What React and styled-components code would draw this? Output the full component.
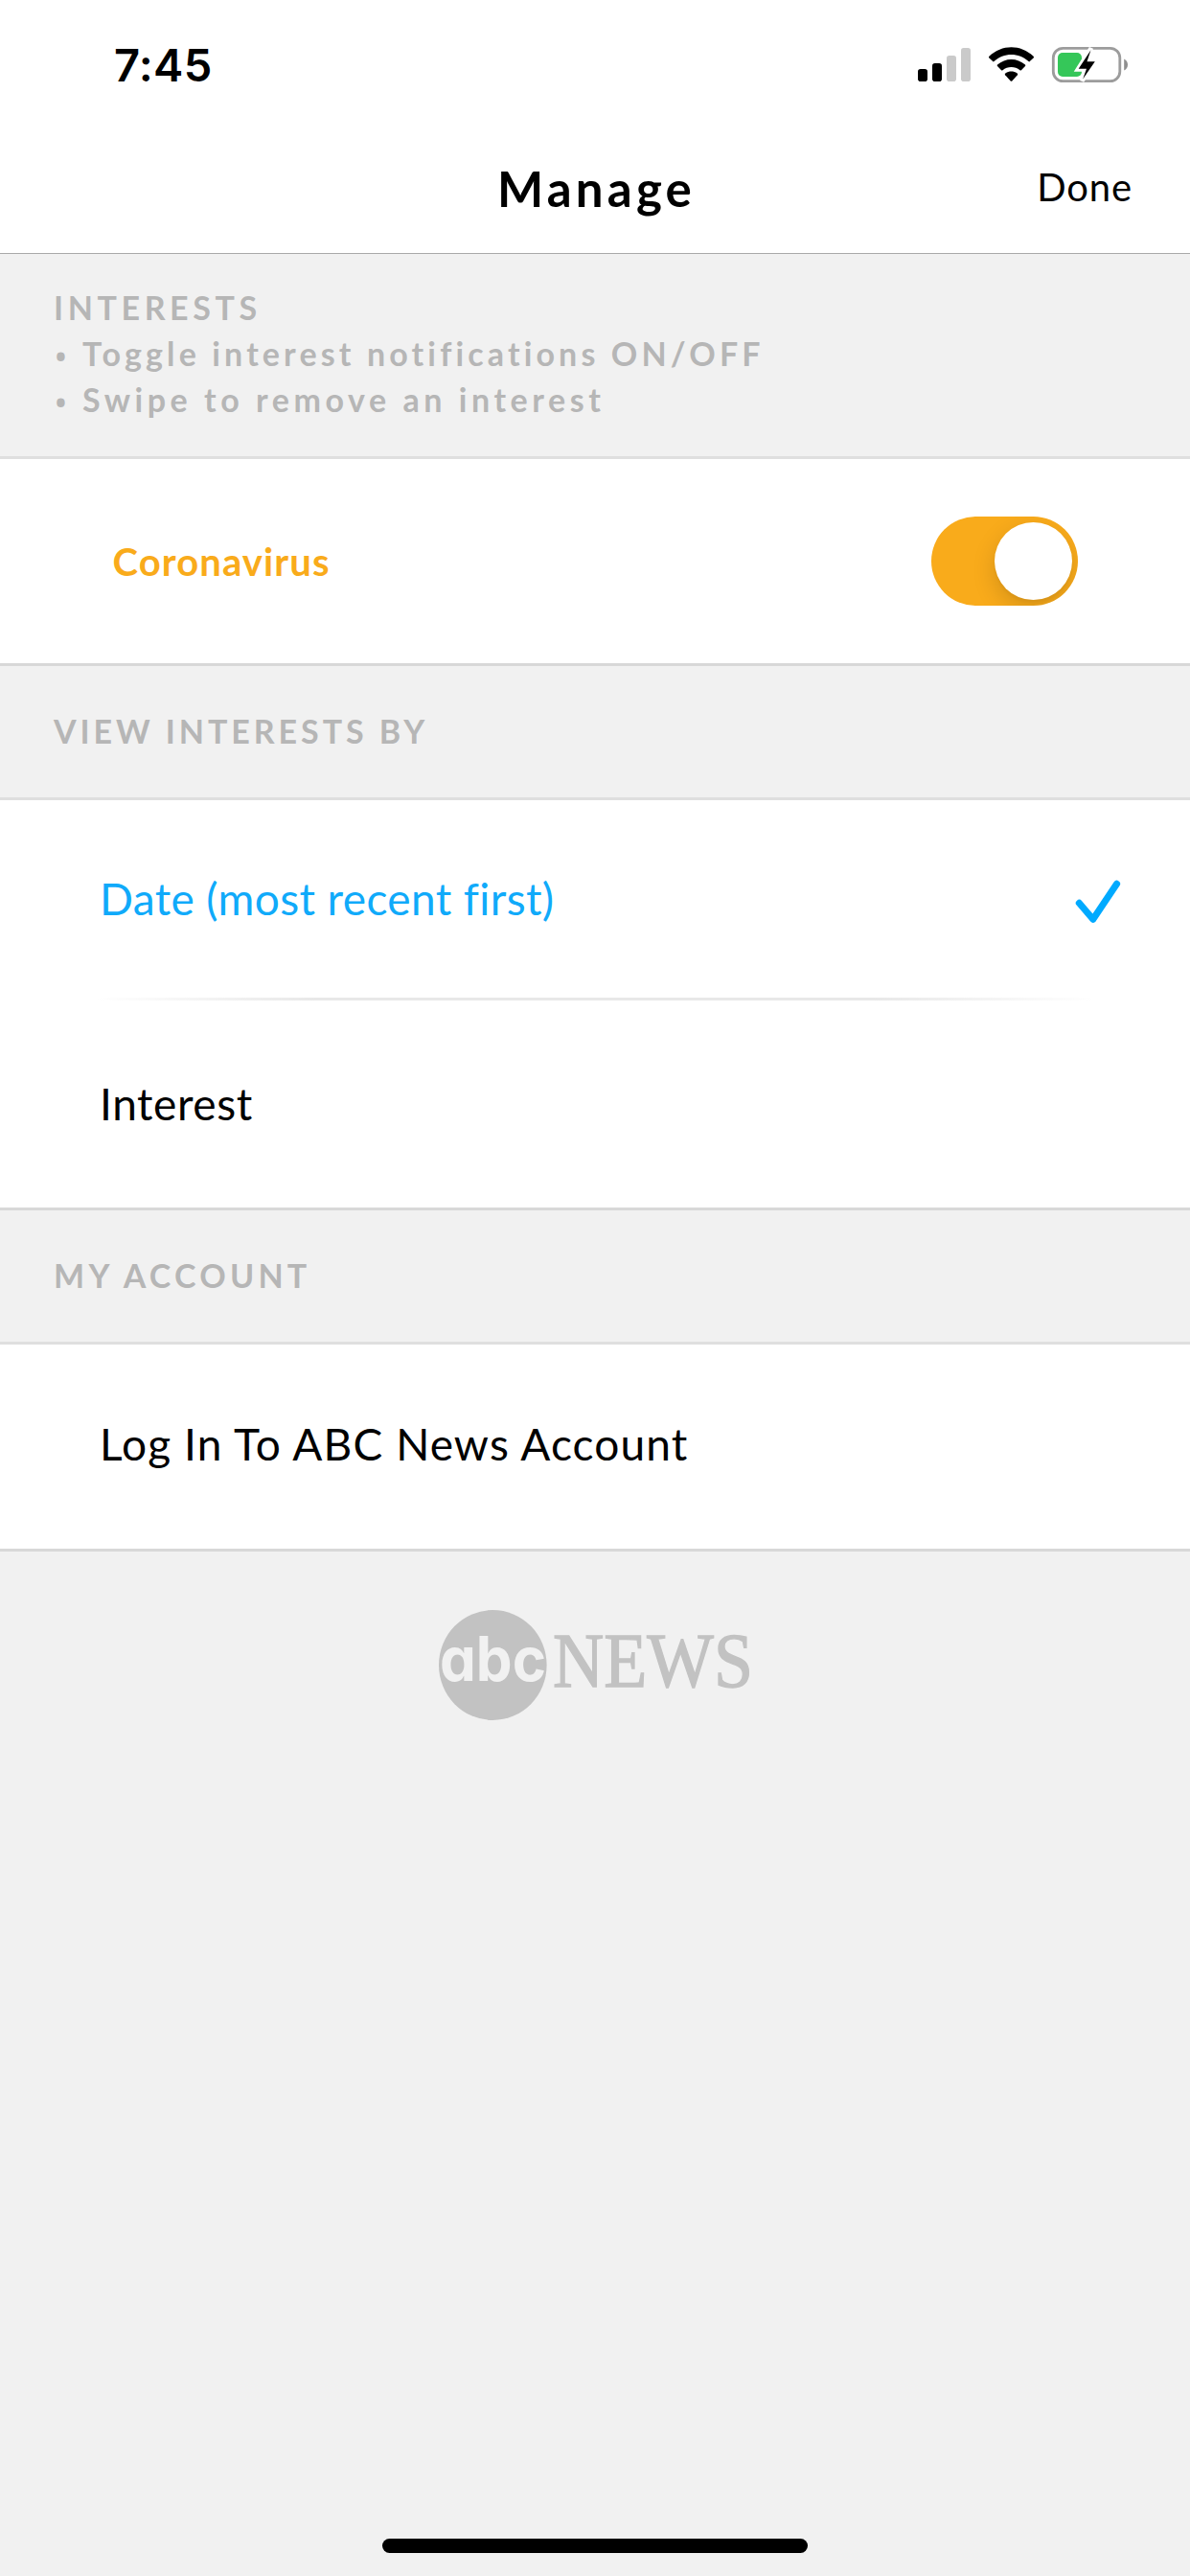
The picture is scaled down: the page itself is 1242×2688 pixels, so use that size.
import React, { useState } from 'react';
import styled, { createGlobalStyle } from 'styled-components';

const GlobalStyle = createGlobalStyle`
  html, body { margin: 0; padding: 0; background: #f1f1f1; }
  *, *::before, *::after { box-sizing: border-box; }
`;

const Screen = styled.main`
  display: flex;
  flex-direction: column;
  width: 1242px;
  height: 2688px;
  overflow: hidden;
  background: #f1f1f1;
  color: #000;
  font-family: Lato, 'Liberation Sans', sans-serif;
`;

const StatusBar = styled.div`
  display: flex;
  align-items: center;
  justify-content: space-between;
  height: 130px;
  padding: 6px 64px 0 119px;
  background: #fff;
`;

const Clock = styled.time`
  font: 600 47px/56px Inter, 'Liberation Sans', sans-serif;
  letter-spacing: 0.3px;
`;

const StatusIcons = styled.svg`
  display: block;
  width: 220px;
  height: 40px;
  margin-top: -2px;
`;

const Header = styled.header`
  display: grid;
  grid-template-columns: 1fr auto 1fr;
  align-items: center;
  height: 135px;
  padding: 0 60px;
  background: #fff;
  border-bottom: 1px solid #a9a9a9;
`;

const Title = styled.h1`
  grid-column: 2;
  margin: 0;
  padding-left: 3px;
  font-size: 51px;
  line-height: 60px;
  font-weight: 700;
  letter-spacing: 4.2px;
`;

const DoneButton = styled.button`
  justify-self: end;
  margin: 0;
  padding: 0 0 4px;
  border: 0;
  background: none;
  color: #000;
  font: 400 40px/48px Lato, 'Liberation Sans', sans-serif;
  letter-spacing: 0.9px;
`;

const SectionHeader = styled.div`
  display: flex;
  flex-direction: column;
  justify-content: center;
  height: ${(p) => (p.$tall ? 214 : 140)}px;
  padding: 0 56px ${(p) => (p.$tall ? 3 : 1)}px;
  border-bottom: 3px solid #dfdfdf;
  color: #b6b6b6;
`;

const SectionTitle = styled.h2`
  margin: 0;
  font-size: 34px;
  line-height: 48px;
  font-weight: 700;
  letter-spacing: ${(p) => p.$tracking}px;
`;

const HintList = styled.ul`
  margin: 0;
  padding: 0;
  list-style: none;
`;

const Hint = styled.li`
  display: flex;
  height: 48px;
  font-size: 34px;
  line-height: 48px;
  font-weight: 700;
  letter-spacing: ${(p) => p.$tracking}px;
  white-space: nowrap;
`;

const Bullet = styled.span`
  width: 30px;
  padding-left: 1px;
  font-family: 'Open Sans', sans-serif;
  font-weight: 600;
  line-height: 55px;
`;

const Group = styled.section`
  background: #fff;
  border-bottom: 3px solid #d8d8d8;
`;

const InterestRow = styled.div`
  display: flex;
  align-items: center;
  justify-content: space-between;
  height: 213px;
  padding: 0 117px 0 117.5px;
`;

const InterestName = styled.span`
  color: #f9ab1b;
  font-size: 40px;
  line-height: 48px;
  font-weight: 700;
  letter-spacing: 1.1px;
`;

const Toggle = styled.button`
  display: flex;
  justify-content: ${(p) => (p.$on ? 'flex-end' : 'flex-start')};
  width: 153px;
  height: 93px;
  margin: 0;
  padding: 6px;
  border: 0;
  border-radius: 47px;
  overflow: hidden;
  background: ${(p) => (p.$on ? '#f9ab1b' : '#e4e4e4')};
`;

const Knob = styled.span`
  width: 81px;
  height: 81px;
  border-radius: 50%;
  background: #fff;
  box-shadow: 0 9px 24px rgba(0, 0, 0, 0.15), 0 3px 3px rgba(0, 0, 0, 0.03);
`;

const OptionRow = styled.div`
  display: flex;
  align-items: center;
  justify-content: space-between;
  height: ${(p) => p.$height}px;
  padding: 0 70px ${(p) => p.$lift || 0}px 104px;
  color: ${(p) => (p.$selected ? '#10aafa' : '#000')};
  font-size: 46px;
  line-height: 54px;
  letter-spacing: ${(p) => p.$tracking}px;
`;

const Divider = styled.hr`
  height: 3px;
  margin: 0 100px;
  border: 0;
  background: linear-gradient(to right, #fff 0, #e8e8e8 230px, #e8e8e8 calc(100% - 230px), #fff 100%);
`;

const CheckIcon = styled.svg`
  display: block;
  width: 52px;
  height: 50px;
  margin-top: 5px;
`;

const Brand = styled.footer`
  display: flex;
  justify-content: center;
  padding-top: 37px;
`;

const BrandLogo = styled.svg`
  display: block;
  width: 370px;
  height: 165px;
`;

const LogoMark = styled.text`
  font: 700 64px Inter, sans-serif;
  font-feature-settings: 'cv11';
  fill: #f1f1f1;
`;

const LogoWord = styled.text`
  font: 400 79.5px 'Liberation Serif', serif;
  fill: #c2c2c2;
  stroke: #c2c2c2;
  stroke-width: 1.3px;
`;

const HomeIndicator = styled.div`
  width: 444px;
  height: 15px;
  margin: auto auto 24px 399px;
  border-radius: 8px;
  background: #000;
`;

function DeviceStatus() {
  return (
    <StatusIcons viewBox="958 47 220 40" aria-hidden="true">
      <rect x="958" y="72" width="10" height="13" rx="2.8" />
      <rect x="973" y="66" width="10" height="19" rx="2.8" />
      <rect x="988" y="58" width="10" height="27" rx="2.8" fill="#cacaca" />
      <rect x="1003" y="50" width="10" height="35" rx="2.8" fill="#cacaca" />
      <path d="M1032.4 58.8C1045.5 46 1065.5 46 1078.6 58.8Q1079.4 59.7 1078.6 60.5L1074.8 64.1Q1074.2 64.7 1073.5 64.1C1063.5 54.5 1047.5 54.5 1037.5 64.1Q1036.8 64.7 1036.2 64.1L1032.4 60.5Q1031.6 59.7 1032.4 58.8Z" />
      <path d="M1041 67.6C1049.3 60 1061.7 60 1070 67.6Q1070.7 68.3 1070 69.1L1065.9 73.2Q1065.2 73.8 1064.5 73.2C1059.5 68.8 1051.5 68.8 1046.5 73.2Q1045.800 73.8 1045.1 73.2L1041 69.1Q1040.3 68.3 1041 67.6Z" />
      <path d="M1049.4 76.4C1053.3 73.8 1057.7 73.8 1061.6 76.4Q1062.8 77.3 1061.9 78.3L1056.3 84.4Q1055.5 85.1 1054.7 84.4L1049.1 78.3Q1048.2 77.3 1049.4 76.4Z" />
      <rect x="1099.3" y="50.3" width="69.5" height="34.4" rx="10" fill="none" stroke="#9c9c9c" strokeWidth="2.8" />
      <path d="M1173.2 61.5Q1177 63.5 1177 67.5T1173.2 73.5Z" fill="#8f8f8f" />
      <rect x="1104" y="55" width="25" height="25" rx="5" fill="#35c759" />
      <path d="M1138.8 50.2L1124.8 72.6H1133L1129.3 84.6L1143.6 63.4H1135.2Z" fill="#fff" stroke="#fff" strokeWidth="4.5" />
      <path d="M1138.5 52.3L1125.7 71.8H1134L1130.2 82.6L1142.8 64.2H1134.5Z" />
    </StatusIcons>
  );
}

function AbcNewsLogo() {
  return (
    <BrandLogo viewBox="436 1656 370 165" role="img" aria-label="abc NEWS">
      <ellipse cx="514.3" cy="1737.5" rx="56.3" ry="57.5" fill="#c2c2c2" />
      <LogoMark x="459" y="1754.3" textLength="111" lengthAdjust="spacingAndGlyphs">abc</LogoMark>
      <LogoWord x="577" y="1760.3" textLength="209" lengthAdjust="spacingAndGlyphs">NEWS</LogoWord>
    </BrandLogo>
  );
}

export default function App() {
  const [notify, setNotify] = useState(true);
  const [sort, setSort] = useState('date');
  const check = (
    <CheckIcon viewBox="1120 916 52 50" aria-hidden="true">
      <path d="M1126.3 942.3L1140.8 959.3L1165.6 922.3" fill="none" stroke="#00aaff" strokeWidth="7" strokeLinecap="round" strokeLinejoin="round" />
    </CheckIcon>
  );

  return (
    <>
      <GlobalStyle />
      <Screen>
        <StatusBar>
          <Clock>7:45</Clock>
          <DeviceStatus />
        </StatusBar>
        <Header>
          <Title>Manage</Title>
          <DoneButton>Done</DoneButton>
        </Header>

        <SectionHeader $tall>
          <SectionTitle $tracking={4.6}>INTERESTS</SectionTitle>
          <HintList>
            <Hint $tracking={4.13}><Bullet>•</Bullet>Toggle interest notifications ON/OFF</Hint>
            <Hint $tracking={4.55}><Bullet>•</Bullet>Swipe to remove an interest</Hint>
          </HintList>
        </SectionHeader>
        <Group>
          <InterestRow>
            <InterestName>Coronavirus</InterestName>
            <Toggle $on={notify} onClick={() => setNotify(!notify)} aria-label="Coronavirus notifications">
              <Knob />
            </Toggle>
          </InterestRow>
        </Group>

        <SectionHeader>
          <SectionTitle $tracking={3.95}>VIEW INTERESTS BY</SectionTitle>
        </SectionHeader>
        <Group>
          <OptionRow $height={206} $tracking={0.38} $selected={sort === 'date'} onClick={() => setSort('date')}>
            Date (most recent first)
            {sort === 'date' && check}
          </OptionRow>
          <Divider />
          <OptionRow $height={216} $lift={1} $tracking={0.6} $selected={sort === 'interest'} onClick={() => setSort('interest')}>
            Interest
            {sort === 'interest' && check}
          </OptionRow>
        </Group>

        <SectionHeader>
          <SectionTitle $tracking={4.25}>MY ACCOUNT</SectionTitle>
        </SectionHeader>
        <Group>
          <OptionRow $height={213} $lift={5} $tracking={1.12}>Log In To ABC News Account</OptionRow>
        </Group>

        <Brand>
          <AbcNewsLogo />
        </Brand>
        <HomeIndicator />
      </Screen>
    </>
  );
}
